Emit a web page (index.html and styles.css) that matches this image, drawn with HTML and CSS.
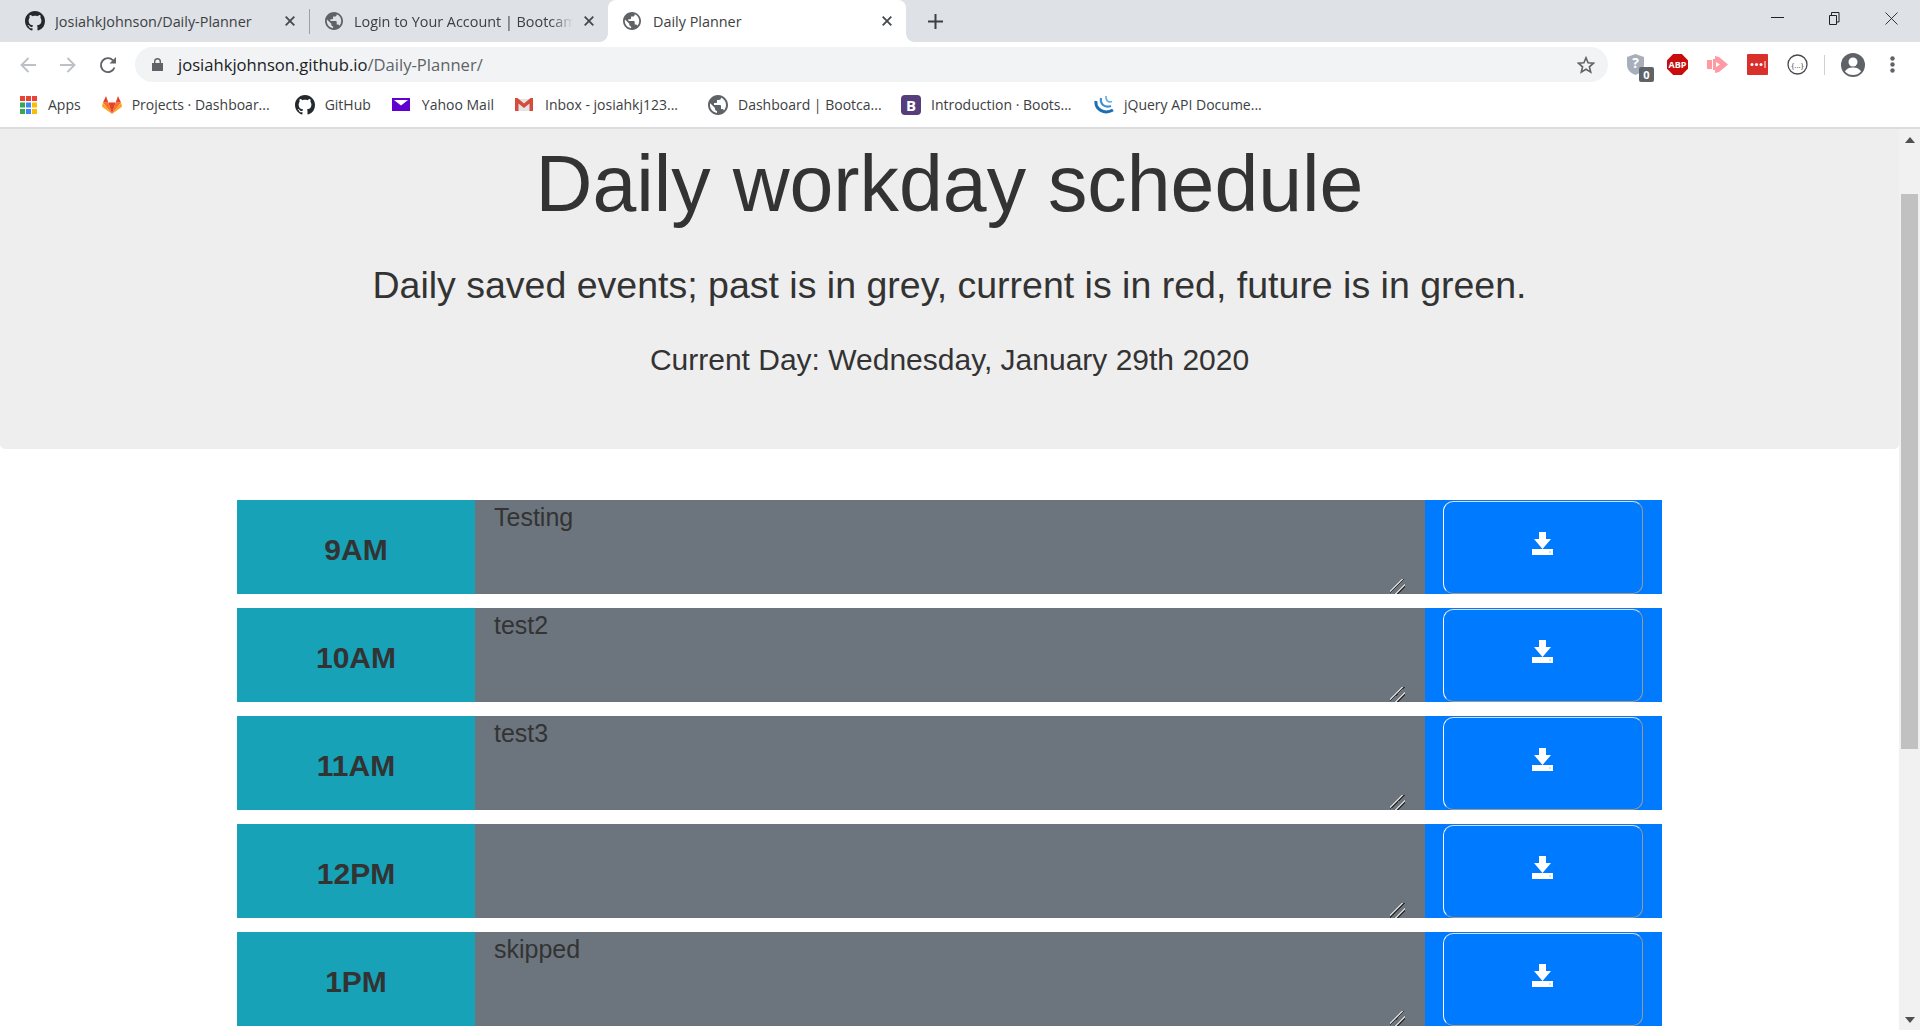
FILE: index.html
```html
<!DOCTYPE html>
<html lang="en">
<head>
    <meta charset="UTF-8">
    <title>Daily Planner</title>
    <link rel="stylesheet" href="styles.css">
</head>
<body>
    <svg class="defs" width="0" height="0">
        <symbol id="globe" viewBox="2 2 20 20">
            <path fill="#5f6368" d="M12 2C6.480 2 2 6.480 2 12s4.480 10 10 10 10-4.480 10-10S17.520 2 12 2zm-1 17.930c-3.950-.490-7-3.850-7-7.930 0-.620.080-1.210.210-1.790L9 15v1c0 1.100.9 2 2 2v1.930zm6.900-2.540c-.260-.810-1-1.390-1.900-1.390h-1v-3c0-.550-.450-1-1-1H8v-2h2c.550 0 1-.450 1-1V7h2c1.100 0 2-.9 2-2v-.410c2.930 1.190 5 4.060 5 7.410 0 2.080-.8 3.970-2.100 5.390z"/>
        </symbol>
        <symbol id="octocat" viewBox="0 0 16 16">
            <path fill="#24292e" d="M8 0C3.580 0 0 3.580 0 8c0 3.540 2.290 6.530 5.470 7.590.4.070.55-.17.55-.38 0-.19-.01-.82-.01-1.490-2.010.37-2.530-.49-2.690-.94-.09-.23-.48-.94-.82-1.130-.28-.15-.68-.52-.01-.53.63-.01 1.080.58 1.230.82.720 1.210 1.870.870 2.330.660.070-.520.280-.870.510-1.070-1.780-.2-3.640-.890-3.640-3.950 0-.870.310-1.590.820-2.150-.080-.2-.360-1.020.080-2.120 0 0 .670-.210 2.200.820.640-.180 1.320-.270 2-.270s1.360.090 2 .270c1.530-1.040 2.200-.820 2.200-.820.440 1.100.160 1.920.080 2.120.510.560.820 1.270.820 2.150 0 3.070-1.870 3.750-3.650 3.950.290.250.540.730.540 1.480 0 1.070-.010 1.930-.010 2.200 0 .210.150.460.550.380A8.010 8.010 0 0 0 16 8c0-4.420-3.580-8-8-8z"/>
        </symbol>
        <symbol id="tab-x" viewBox="0 0 10 10">
            <path d="M.7 .7l8.600 8.600M9.300 .7 .7 9.300" stroke="#45484c" stroke-width="1.800"/>
        </symbol>
        <symbol id="save" viewBox="0 0 21 23">
            <path fill="#fff" d="M7 0h7v7h5l-8.500 10L2 7h5zM0 17h21v6H0z"/>
            <rect x="17" y="19.500" width="2" height="1" fill="#8cc4ff"/>
        </symbol>
    </svg>

    <div class="browser">
        <div class="tab-strip">
            <div class="tab tab-first">
                <svg class="favicon"><use href="#octocat"/></svg>
                <span class="tab-title">JosiahkJohnson/Daily-Planner</span>
                <svg class="tab-close"><use href="#tab-x"/></svg>
            </div>
            <div class="tab tab-second">
                <svg class="favicon favicon-globe"><use href="#globe"/></svg>
                <span class="tab-title tab-title-fade">Login to Your Account | Bootcamp</span>
                <svg class="tab-close"><use href="#tab-x"/></svg>
            </div>
            <div class="tab tab-active">
                <svg class="favicon favicon-globe"><use href="#globe"/></svg>
                <span class="tab-title">Daily Planner</span>
                <svg class="tab-close"><use href="#tab-x"/></svg>
            </div>
            <svg class="new-tab" viewBox="0 0 15 15"><path d="M7.500 0v15M0 7.500h15" stroke="#3c4043" stroke-width="2"/></svg>
            <div class="window-buttons">
                <svg viewBox="0 0 13 13"><path d="M0 5.500h13" stroke="#222"/></svg>
                <svg viewBox="0 0 13 13"><path d="M1.500 3.500h7v9h-7zM3.500 3.500v-3h7.500v9.500h-2.500" fill="none" stroke="#222"/></svg>
                <svg viewBox="0 0 13 13"><path d="M.5 .5l12 12M12.500 .5l-12 12" stroke="#222" stroke-width=".9"/></svg>
            </div>
        </div>

        <div class="toolbar">
            <svg class="nav-icon" viewBox="0 0 18 18"><path d="M17 9H2.500M9.500 2 2.500 9l7 7" fill="none" stroke="#bdc1c6" stroke-width="1.900"/></svg>
            <svg class="nav-icon" viewBox="0 0 18 18"><path d="M1 9h14.500M8.500 2l7 7-7 7" fill="none" stroke="#bdc1c6" stroke-width="1.900"/></svg>
            <svg class="nav-icon nav-reload" viewBox="0 0 18 18"><path d="M15.500 11.500A7 7 0 1 1 14 4.300" fill="none" stroke="#5f6368" stroke-width="1.900"/><path d="M17 1v6.500h-6.500z" fill="#5f6368"/></svg>
            <div class="omnibox">
                <svg class="lock" viewBox="0 0 11 13"><path fill="#5f6368" d="M0 5h11v8H0zM2 5V3.500a3.500 3.500 0 0 1 7 0V5H7.600V3.500a2.100 2.100 0 0 0-4.200 0V5z"/></svg>
                <span class="url"><span class="url-host">josiahkjohnson.github.io</span>/Daily-Planner/</span>
                <svg class="star" viewBox="0 0 18 18"><path d="M9 1.800 11.100 6.800 16.500 7.200 12.400 10.800 13.700 16.100 9 13.300 4.300 16.100 5.600 10.800 1.500 7.200 6.900 6.800z" fill="none" stroke="#5f6368" stroke-width="1.600"/></svg>
            </div>
            <div class="extensions">
                <div class="ext">
                    <svg viewBox="0 0 21 21"><path fill="#a9afba" d="M8.500 0 17 3v8c0 5-4 8.500-8.500 10C4 19.500 0 16 0 11V3z"/><text x="8.500" y="14" class="ext-help-mark">?</text></svg>
                    <span class="ext-badge">0</span>
                </div>
                <div class="ext">
                    <svg viewBox="0 0 21 21"><path fill="#c70d0d" d="M6.200 0h8.600L21 6.200v8.600L14.800 21H6.200L0 14.800V6.200z"/><text x="10.500" y="14.300" class="ext-abp">ABP</text></svg>
                </div>
                <div class="ext">
                    <svg viewBox="0 0 21 21"><path fill="#ff9aa2" fill-rule="evenodd" d="M0 6h5v9H0zM6 5h2V2l4 1 9 7.500-9 7.500-4 1v-3H6zM9 8v5l4-2.500z"/></svg>
                </div>
                <div class="ext">
                    <svg viewBox="0 0 21 21"><rect width="21" height="21" rx="1" fill="#d9302c"/><circle cx="5" cy="10.500" r="1.500" fill="#fff"/><circle cx="9.500" cy="10.500" r="1.500" fill="#fff"/><circle cx="14" cy="10.500" r="1.500" fill="#fff"/><path d="M18 7v7" stroke="#fff"/></svg>
                </div>
                <div class="ext">
                    <svg viewBox="0 0 21 21"><circle cx="10.500" cy="10.500" r="9.500" fill="#fff" stroke="#45484c" stroke-width="1.300"/><text x="10.500" y="13.500" class="ext-braces">{...}</text></svg>
                </div>
            </div>
            <span class="toolbar-sep"></span>
            <svg class="avatar" viewBox="0 0 24 24"><circle cx="12" cy="12" r="12" fill="#5f6368"/><circle cx="12" cy="9" r="4.500" fill="#fff"/><path d="M4 18.500c2-3.500 5-4 8-4s6 .5 8 4c-2 2.500-5 3.500-8 3.500s-6-1-8-3.500z" fill="#fff"/></svg>
            <svg class="menu-dots" viewBox="0 0 5 17"><circle cx="2.500" cy="2.500" r="2.200" fill="#5f6368"/><circle cx="2.500" cy="8.500" r="2.200" fill="#5f6368"/><circle cx="2.500" cy="14.500" r="2.200" fill="#5f6368"/></svg>
        </div>

        <div class="bookmarks">
            <a class="bookmark">
                <svg class="favicon favicon-apps" viewBox="0 0 18 20">
                    <rect x="0" y="1" width="5" height="5" fill="#ea4335"/><rect x="6" y="1" width="5" height="5" fill="#ea4335"/><rect x="12" y="1" width="5" height="5" fill="#ea4335"/>
                    <rect x="0" y="7.500" width="5" height="5" fill="#34a853"/><rect x="6" y="7.500" width="5" height="5" fill="#4285f4"/><rect x="12" y="7.500" width="5" height="5" fill="#fbbc05"/>
                    <rect x="0" y="14" width="5" height="5" fill="#34a853"/><rect x="6" y="14" width="5" height="5" fill="#4285f4"/><rect x="12" y="14" width="5" height="5" fill="#fbbc05"/>
                </svg>
                Apps
            </a>
            <a class="bookmark bookmark-long">
                <svg class="favicon" viewBox="0 0 20 20"><path fill="#e24329" d="M10 19 13.700 7.500H6.300z"/><path fill="#fc6d26" d="M10 19 6.300 7.500H1z"/><path fill="#fca326" d="M1 7.500 0 11c0 .4.100.7.400.9L10 19z"/><path fill="#e24329" d="M1 7.500h5.300L4 1z"/><path fill="#fc6d26" d="M10 19l3.700-11.500H19z"/><path fill="#fca326" d="M19 7.500 20 11c0 .4-.1.700-.4.900L10 19z"/><path fill="#e24329" d="M19 7.500h-5.300L16 1z"/></svg>
                Projects · Dashboar...
            </a>
            <a class="bookmark">
                <svg class="favicon"><use href="#octocat"/></svg>
                GitHub
            </a>
            <a class="bookmark">
                <svg class="favicon" viewBox="0 0 20 20"><rect y="3" width="18" height="13" fill="#5f01d1"/><path d="M2 5h14L9 10.500z" fill="#fff"/></svg>
                Yahoo Mail
            </a>
            <a class="bookmark bookmark-long">
                <svg class="favicon" viewBox="0 0 20 20"><path fill="#e4e4e4" d="M0 4h18v12H0z"/><path fill="#d54b3d" d="M0 3h2.500L9 8.500 15.500 3H18v13h-3.500V8.500L9 13 3.500 8.500V16H0z"/></svg>
                Inbox - josiahkj123...
            </a>
            <a class="bookmark bookmark-long">
                <svg class="favicon"><use href="#globe"/></svg>
                Dashboard | Bootca...
            </a>
            <a class="bookmark bookmark-long">
                <svg class="favicon" viewBox="0 0 20 20"><rect width="20" height="20" rx="4" fill="#563d7c"/><text x="10" y="15.500" class="bootstrap-b">B</text></svg>
                Introduction · Boots...
            </a>
            <a class="bookmark">
                <svg class="favicon" viewBox="0 0 20 20" fill="none"><path d="M2 6C1 14 10 20 19 15" stroke="#1d6fb5" stroke-width="3"/><path d="M7 3C6 9 10 13 17 11" stroke="#3f8fcf" stroke-width="2.200"/><path d="M12 1c-.5 4 2 7 6 5.500" stroke="#6aaee0" stroke-width="1.700"/></svg>
                jQuery API Docume...
            </a>
        </div>
    </div>

    <div class="viewport">
        <main class="page">
            <!-- Header -->
            <header class="jumbotron">
                <h1 class="display-title">Daily workday schedule</h1>
                <p class="lead">Daily saved events; past is in grey, current is in red, future is in green.</p>
                <p class="current-day">Current Day: Wednesday, January 29th 2020</p>
            </header>

            <!-- Time blocks -->
            <div class="schedule">
                <div class="time-row">
                    <div class="hour">9AM</div>
                    <div class="event-cell past"><textarea class="event">Testing</textarea></div>
                    <div class="save-cell"><button class="save-btn"><svg class="save-icon"><use href="#save"/></svg></button></div>
                </div>
                <div class="time-row">
                    <div class="hour">10AM</div>
                    <div class="event-cell past"><textarea class="event">test2</textarea></div>
                    <div class="save-cell"><button class="save-btn"><svg class="save-icon"><use href="#save"/></svg></button></div>
                </div>
                <div class="time-row">
                    <div class="hour">11AM</div>
                    <div class="event-cell past"><textarea class="event">test3</textarea></div>
                    <div class="save-cell"><button class="save-btn"><svg class="save-icon"><use href="#save"/></svg></button></div>
                </div>
                <div class="time-row">
                    <div class="hour">12PM</div>
                    <div class="event-cell past"><textarea class="event"></textarea></div>
                    <div class="save-cell"><button class="save-btn"><svg class="save-icon"><use href="#save"/></svg></button></div>
                </div>
                <div class="time-row">
                    <div class="hour">1PM</div>
                    <div class="event-cell past"><textarea class="event">skipped</textarea></div>
                    <div class="save-cell"><button class="save-btn"><svg class="save-icon"><use href="#save"/></svg></button></div>
                </div>
            </div>
        </main>

        <!-- Scrollbar -->
        <div class="scrollbar">
            <svg class="scroll-arrow" viewBox="0 0 10 6"><path d="M5 0l5 6H0z" fill="#505050"/></svg>
            <div class="scroll-track"><div class="scroll-thumb"></div></div>
            <svg class="scroll-arrow" viewBox="0 0 10 6"><path d="M0 0h10L5 6z" fill="#505050"/></svg>
        </div>
    </div>
</body>
</html>
```

FILE: styles.css
```css
/* Reset */
* {
    box-sizing: border-box;
}

html,
body {
    height: 100%;
}

body {
    margin: 0;
    display: flex;
    flex-direction: column;
    overflow: hidden;
    font-family: "Liberation Sans", Arial, sans-serif;
    color: #333;
    background: #fff;
}

.defs {
    position: absolute;
}

/* Browser frame */
.browser {
    flex: none;
    font-family: "Open Sans", "Noto Sans", sans-serif;
    border-bottom: 2px solid #dadce0;
}

.favicon {
    flex: none;
    width: 20px;
    height: 20px;
}

.favicon-globe {
    width: 18px;
    height: 18px;
}

.favicon-apps {
    width: 18px;
}

/* Tabs */
.tab-strip {
    height: 42px;
    padding-left: 10px;
    display: flex;
    background: #dee1e6;
}

.tab {
    padding-right: 14px;
    display: flex;
    align-items: center;
    gap: 10px;
    position: relative;
    font-size: 14.4px;
    color: #3c4043;
}

.tab-first {
    width: 299px;
    padding-left: 15px;
}

.tab-second {
    width: 299px;
    padding-left: 16px;
    gap: 11px;
}

/* divider between the two inactive tabs */
.tab-second::before {
    content: "";
    position: absolute;
    left: 0;
    top: 9px;
    width: 1px;
    height: 25px;
    background: #9aa0a6;
}

.tab-title {
    flex: 1;
    min-width: 0;
    overflow: hidden;
    white-space: nowrap;
}

.tab-title-fade {
    -webkit-mask-image: linear-gradient(to right, #000 calc(100% - 22px), transparent);
    mask-image: linear-gradient(to right, #000 calc(100% - 22px), transparent);
}

.tab-close {
    flex: none;
    width: 10px;
    height: 10px;
}

.tab-active {
    width: 298px;
    padding-left: 15px;
    gap: 12px;
    background: #fff;
    border-radius: 8px 8px 0 0;
}

.tab-active::before,
.tab-active::after {
    content: "";
    position: absolute;
    bottom: 0;
    width: 8px;
    height: 8px;
}

.tab-active::before {
    left: -8px;
    background: radial-gradient(circle at 0 0, transparent 7.5px, #fff 8px);
}

.tab-active::after {
    right: -8px;
    background: radial-gradient(circle at 100% 0, transparent 7.5px, #fff 8px);
}

.new-tab {
    flex: none;
    width: 15px;
    height: 15px;
    margin: 14px 0 0 22px;
}

.window-buttons {
    margin-left: auto;
    display: flex;
    gap: 44px;
    padding: 12px 22px 0 0;
}

.window-buttons svg {
    width: 13px;
    height: 13px;
}

/* Toolbar */
.toolbar {
    height: 42px;
    padding: 3px 0 0 19px;
    display: flex;
    align-items: center;
    background: #fff;
}

.nav-icon {
    flex: none;
    width: 18px;
    height: 18px;
    margin-right: 22px;
}

.nav-reload {
    margin-right: 18px;
}

.omnibox {
    flex: none;
    width: 1473px;
    height: 35px;
    padding: 0 13px 0 17px;
    display: flex;
    align-items: center;
    border-radius: 18px;
    background: #f1f3f4;
    font-size: 16.6px;
}

.lock {
    width: 11px;
    height: 13px;
    margin-right: 15px;
}

.url {
    flex: 1;
    color: #5f6368;
}

.url-host {
    color: #202124;
}

.star {
    width: 18px;
    height: 18px;
}

.extensions {
    margin-left: 19px;
    display: flex;
    align-items: center;
    gap: 19px;
}

.ext {
    width: 21px;
    height: 21px;
    position: relative;
}

.ext svg {
    display: block;
    width: 21px;
    height: 21px;
}

.ext-badge {
    position: absolute;
    left: 12px;
    top: 13px;
    width: 15px;
    height: 15px;
    border-radius: 2px;
    background: #5f6368;
    color: #fff;
    font-size: 11px;
    font-weight: bold;
    line-height: 15px;
    text-align: center;
}

.ext-help-mark {
    fill: #fff;
    font-size: 14px;
    font-weight: bold;
    text-anchor: middle;
}

.ext-abp {
    fill: #fff;
    font-size: 9px;
    font-weight: bold;
    text-anchor: middle;
}

.ext-braces {
    fill: #444;
    font-size: 8px;
    text-anchor: middle;
}

.toolbar-sep {
    flex: none;
    width: 1px;
    height: 20px;
    margin: 0 16px;
    background: #d0d2d5;
}

.avatar {
    flex: none;
    width: 24px;
    height: 24px;
}

.menu-dots {
    flex: none;
    width: 5px;
    height: 17px;
    margin-left: 25px;
}

/* Bookmarks */
.bookmarks {
    height: 43px;
    padding: 0 0 2px 20px;
    display: flex;
    align-items: center;
    gap: 21px;
    background: #fff;
    font-size: 14px;
    color: #3c4043;
}

.bookmark {
    display: flex;
    align-items: center;
    gap: 10px;
    white-space: nowrap;
}

.bookmark-long {
    width: 172px;
}

.bootstrap-b {
    fill: #fff;
    font-size: 15px;
    font-weight: bold;
    text-anchor: middle;
}

/* Page */
.viewport {
    flex: 1;
    min-height: 0;
    display: flex;
}

.page {
    flex: 1;
    min-width: 0;
    overflow: hidden;
}

.jumbotron {
    height: 320px;
    padding-top: 7px;
    background: #eee;
    border-radius: 0 0 5px 5px;
    text-align: center;
}

.display-title {
    margin: 0;
    font-size: 78.8px;
    font-weight: 300;
    line-height: 96px;
}

.lead {
    margin: 24px 0 0;
    font-size: 37.5px;
    line-height: 58px;
}

.current-day {
    margin: 24px 0 0;
    font-size: 30px;
    line-height: 44px;
}

/* Time blocks */
.schedule {
    width: 1425px;
    margin: 51px 0 0 237px;
    display: flex;
    flex-direction: column;
    gap: 14px;
}

.time-row {
    height: 94px;
    display: flex;
}

.hour {
    width: 238px;
    padding-top: 5px;
    display: flex;
    align-items: center;
    justify-content: center;
    background: #17a2b8;
    font-size: 30px;
    font-weight: bold;
}

.event-cell {
    width: 950px;
    padding: 0 20px 0 15px;
}

.event {
    display: block;
    width: 100%;
    height: 100%;
    padding: 0 3px 0 4px;
    background: transparent;
    border: 0;
    border-radius: 0;
    outline: none;
    font-family: inherit;
    font-size: 25px;
    line-height: 34px;
    color: #333;
}

/* resize grip, two diagonal strokes */
.event::-webkit-resizer {
    background: linear-gradient(135deg, transparent 38%, #ccc 38%, #ccc 44%, #333 44%, #333 50%, transparent 50%, transparent 66%, #ccc 66%, #ccc 72%, #333 72%, #333 78%, transparent 78%);
}

.past {
    background: #6c757d;
}

.save-cell {
    flex: 1;
    padding: 1px 19px 0 18px;
    background: #007bff;
}

.save-btn {
    width: 100%;
    height: 100%;
    display: flex;
    align-items: center;
    justify-content: center;
    padding: 0 2px 8px 0;
    background: #007bff;
    border: 1px solid;
    border-color: #ddd #999 #999 #fff;
    border-radius: 10px;
}

.save-icon {
    width: 21px;
    height: 23px;
}

/* Scrollbar */
.scrollbar {
    flex: none;
    width: 21px;
    padding: 8px 0 7px;
    display: flex;
    flex-direction: column;
    align-items: center;
    background: #f1f1f1;
}

.scroll-arrow {
    flex: none;
    width: 10px;
    height: 6px;
}

.scroll-track {
    flex: 1;
    width: 100%;
    padding: 51px 2px 0;
}

.scroll-thumb {
    height: 555px;
    background: #c1c1c1;
}
```
